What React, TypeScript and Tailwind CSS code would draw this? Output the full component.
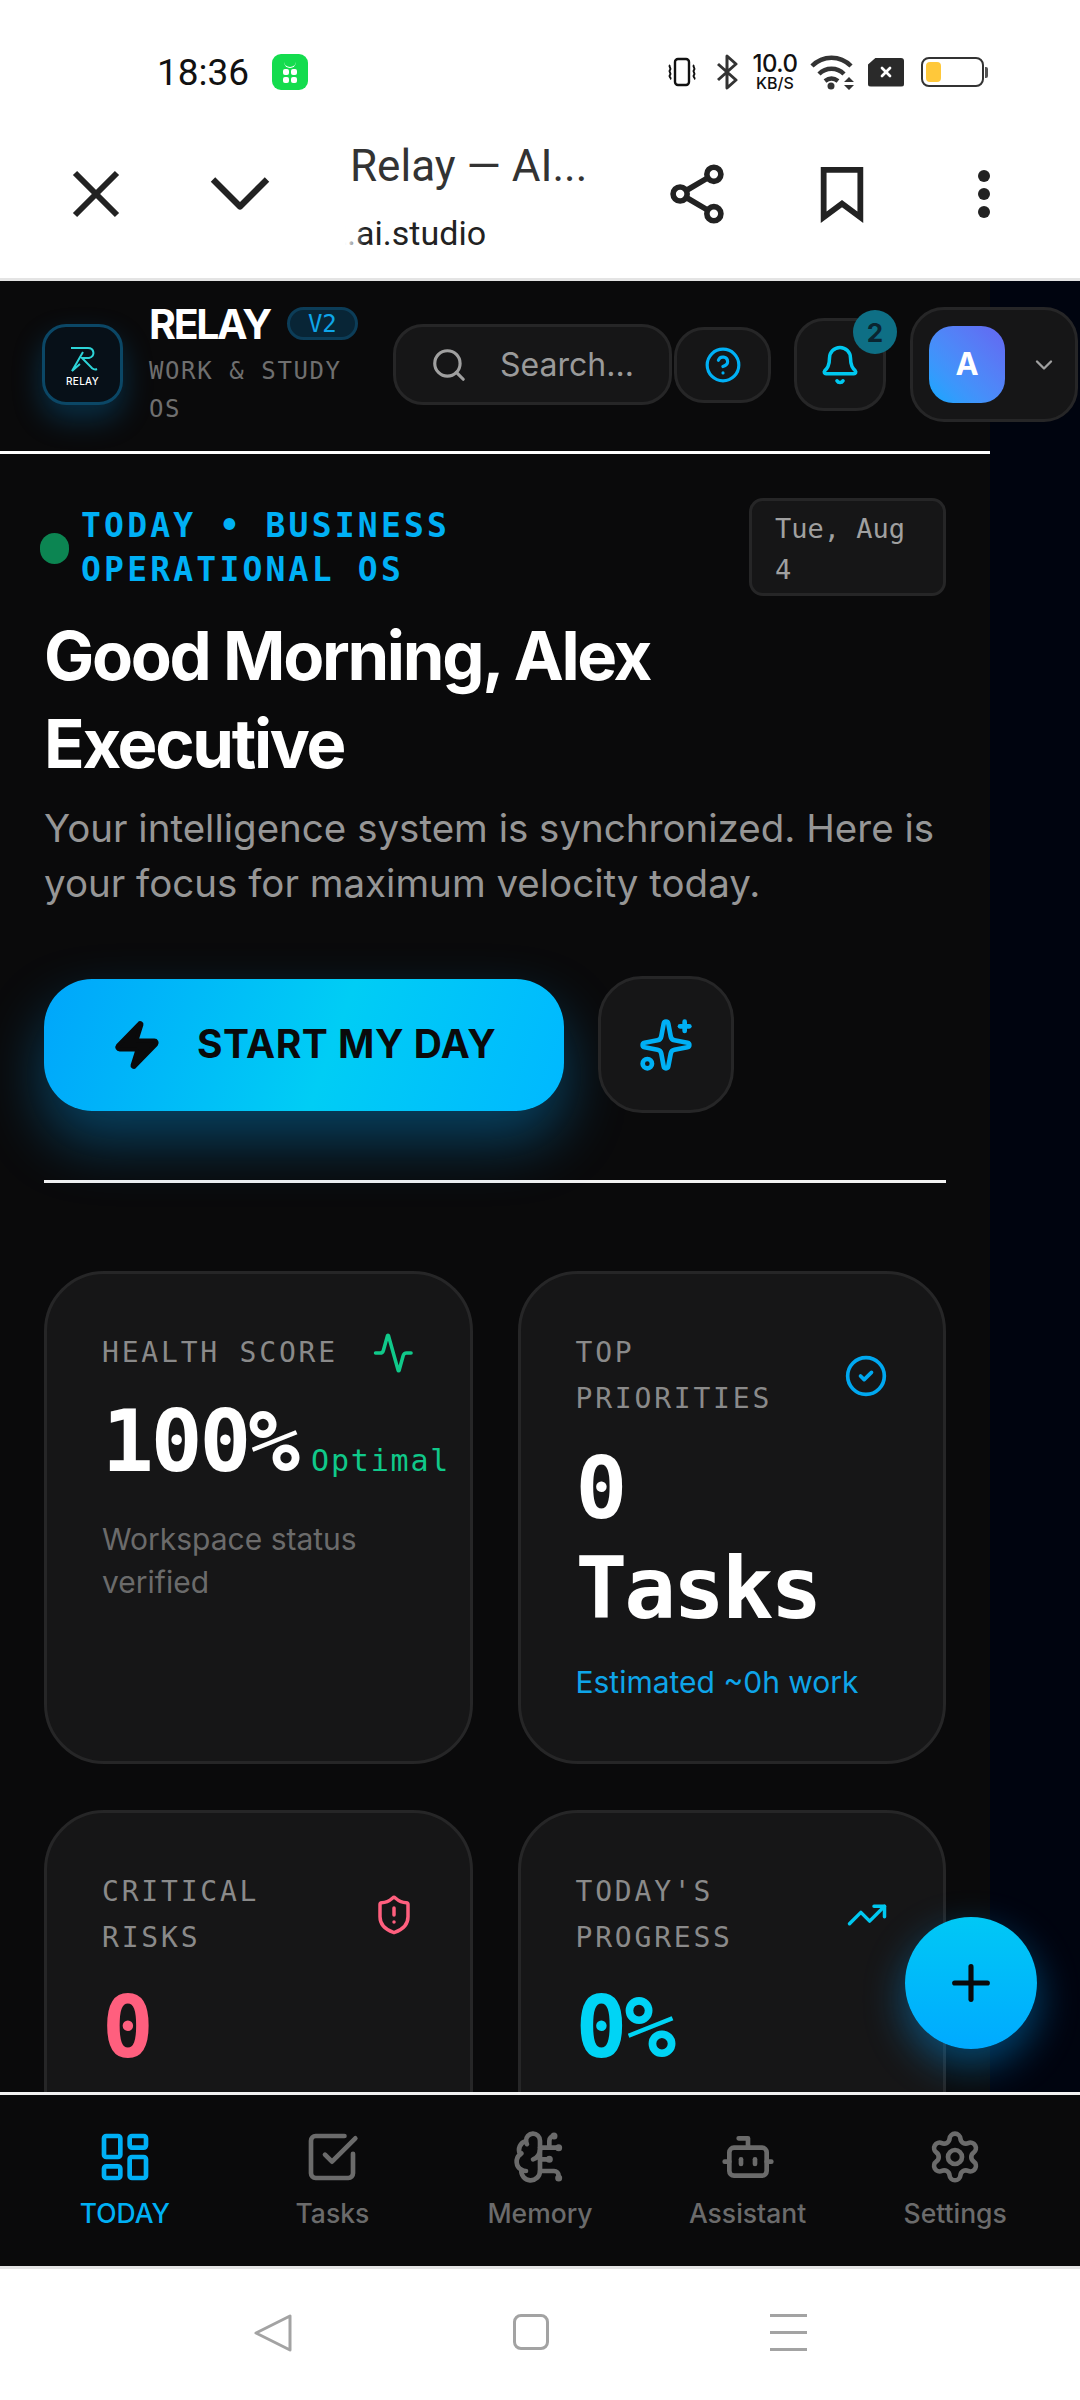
import {
  Activity,
  Bell,
  Bot,
  BrainCircuit,
  ChevronDown,
  CircleCheck,
  CircleHelp,
  LayoutDashboard,
  Plus,
  Search,
  Settings,
  ShieldAlert,
  Sparkles,
  SquareCheckBig,
  TrendingUp,
  X,
  Zap,
} from 'lucide-react'

const mono = "font-['DejaVu_Sans_Mono',monospace]"

function StatusIcons() {
  return (
    <div className="flex items-center text-[#222]">
      <svg width="32" height="30" viewBox="0 0 32 30" fill="none" stroke="#111" strokeWidth="2.4">
        <rect x="9" y="2" width="14" height="26" rx="3" />
        <path d="M4 8c-2 2 2 3 0 5s2 3 0 5 2 3 0 4M28 8c-2 2 2 3 0 5s2 3 0 5 2 3 0 4" strokeWidth="2" />
      </svg>
      <svg className="ml-[18px]" width="22" height="36" viewBox="0 0 22 36" fill="none" stroke="#333" strokeWidth="3" strokeLinejoin="round">
        <path d="M2 10l18 16-9 8V2l9 8L2 26" />
      </svg>
      <div className="ml-[12px] flex w-[50px] flex-col items-center font-['Inter',sans-serif] leading-none text-[#111]">
        <span className="text-[24px] font-medium leading-[18px] tracking-[-0.5px]">10.0</span>
        <span className="mt-[3px] text-[16px] font-medium leading-[14px]">KB/S</span>
      </div>
      <svg className="ml-[10px]" width="46" height="36" viewBox="0 0 46 36" fill="none" stroke="#333" strokeWidth="4.5">
        <path d="M2 12c11-11 28-11 39 0M9 20c7-7 18-7 25 0M15 27c4-3 9-3 13 0" />
        <circle cx="21" cy="32" r="3.5" fill="#333" stroke="none" />
        <path d="M39 23l5 5h-10zM39 36l5-5h-10z" fill="#333" stroke="none" />
      </svg>
      <div className="ml-[12px] flex h-[29px] w-[36px] items-center justify-center rounded-[3px] bg-[#2a2a2a] [clip-path:polygon(22%_0,100%_0,100%_100%,0_100%,0_24%)]">
        <X size={16} color="#fff" strokeWidth={4} />
      </div>
      <div className="ml-[17px] flex h-[30px] w-[63px] items-center rounded-[8px] border-[2.5px] border-[#333] p-[3px]">
        <div className="h-full w-[15px] rounded-[4px] bg-[#ffc83a]" />
      </div>
      <div className="ml-[1px] h-[11px] w-[3px] rounded-r-[2px] bg-[#555]" />
    </div>
  )
}

function Browser() {
  return (
    <div className="border-b-[3px] border-[#e4e4e4] bg-white">
      <div className="flex h-[98px] items-center justify-between pl-[157px] pr-[92px] pt-[46px]">
        <div className="flex items-center">
          <span className="font-['Roboto',sans-serif] text-[37px] leading-none text-[#111]">18:36</span>
          <div className="ml-[23px] flex h-[36px] w-[36px] flex-col items-center justify-center gap-[1px] rounded-[9px] bg-[#14dc4e]">
            <div className="h-[7px] w-[12px] rounded-b-full border-b-[1.5px] border-white" />
            <div className="grid grid-cols-2 gap-[2px]">
              <div className="h-[6px] w-[6px] rounded-[2px] bg-white" />
              <div className="h-[6px] w-[6px] rounded-[2px] bg-white" />
              <div className="h-[6px] w-[6px] rounded-[2px] bg-white" />
              <div className="h-[6px] w-[6px] rounded-[2px] bg-white" />
            </div>
          </div>
        </div>
        <StatusIcons />
      </div>
      <div className="flex h-[180px] items-start">
        <X className="ml-[54px] mt-[54px] shrink-0" size={84} color="#222" strokeWidth={1.7} strokeLinecap="butt" />
        <ChevronDown className="ml-[48px] mt-[41px] shrink-0" size={108} color="#222" strokeWidth={1.4} strokeLinecap="butt" />
        <div className="ml-[56px] mt-[40px] w-[270px] shrink-0 font-['Roboto',sans-serif]">
          <div className="text-[44px] leading-[56px] text-[#333]">Relay — AI...</div>
          <div className="relative mt-[18px] h-[42px] text-[34px] leading-[42px] text-[#222]">
            <span className="absolute left-[-22px] whitespace-nowrap">2.ai.studio</span>
            <div className="absolute inset-y-0 left-[-24px] w-[38px] bg-gradient-to-r from-white from-50% to-transparent" />
          </div>
        </div>
        <svg className="ml-[48px] mt-[66px] shrink-0" width="58" height="60" viewBox="0 0 58 64" fill="none" stroke="#222" strokeWidth="6">
          <circle cx="47" cy="11" r="7.5" />
          <circle cx="11" cy="32" r="7.5" />
          <circle cx="47" cy="53" r="7.5" />
          <path d="M18 28l22-13M18 36l22 13" />
        </svg>
        <svg className="ml-[94px] mt-[69px] shrink-0" width="44" height="56" viewBox="0 0 44 58" fill="none" stroke="#222" strokeWidth="6">
          <path d="M3 3h38v49L22 38 3 52z" strokeLinejoin="miter" />
        </svg>
        <div className="ml-[114px] mt-[72px] flex shrink-0 flex-col gap-[6px]">
          <div className="h-[12px] w-[12px] rounded-full bg-[#222]" />
          <div className="h-[12px] w-[12px] rounded-full bg-[#222]" />
          <div className="h-[12px] w-[12px] rounded-full bg-[#222]" />
        </div>
      </div>
    </div>
  )
}

function Header() {
  return (
    <header className="flex h-[173px] w-[990px] items-center border-b-[3px] border-white pb-[3px] pl-[42px]">
      <div className="relative h-[81px] w-[81px] shrink-0 rounded-[24px] border-[3px] border-[#0b4766] bg-[#071018] shadow-[0_14px_30px_rgba(0,140,220,0.28)]">
        <svg className="absolute left-[25px] top-[20px]" width="28" height="26" viewBox="0 0 28 26" fill="none" stroke="#2dd4d8" strokeWidth="2">
          <path d="M1 1h17c6 0 8 8 1 10H12l9 9c1 2 4 3 6 2" />
          <path d="M13 5L2 24l8-7" />
        </svg>
        <div className="absolute inset-x-0 top-[49px] text-center font-['Inter',sans-serif] text-[10px] font-medium leading-[10px] tracking-[0.3px] text-white">RELAY</div>
      </div>
      <div className="ml-[26px] w-[244px] shrink-0">
        <div className="flex items-center">
          <span className="font-['Inter',sans-serif] text-[41px] font-bold leading-[44px] tracking-[-2.3px] text-white">RELAY</span>
          <span className={`ml-[17px] flex h-[33px] w-[71px] items-center justify-center rounded-full border-[3px] border-[#0c3d58] bg-[#082536] text-[24px] leading-none text-[#0ea5e9] ${mono}`}>V2</span>
        </div>
        <div className={`mt-[6px] w-[210px] text-[24px] leading-[38px] tracking-[1.6px] text-[#6f6f6f] ${mono}`}>WORK &amp; STUDY OS</div>
      </div>
      <div className="flex h-[81px] w-[279px] shrink-0 items-center rounded-[30px] border-[3px] border-[#262627] bg-[#161617] pl-[34px]">
        <Search size={38} color="#a0a0a0" strokeWidth={2} />
        <span className="ml-[32px] font-['Inter',sans-serif] text-[32px] text-[#9a9a9a]">Search...</span>
      </div>
      <div className="ml-[2px] flex h-[76px] w-[97px] shrink-0 items-center justify-center rounded-[30px] border-[3px] border-[#262627] bg-[#161617]">
        <CircleHelp size={38} color="#00b0f5" strokeWidth={2} />
      </div>
      <div className="relative ml-[23px] flex h-[93px] w-[92px] shrink-0 items-center justify-center rounded-[30px] border-[3px] border-[#262627] bg-[#161617]">
        <Bell size={42} color="#00c8f0" strokeWidth={2} />
        <div className="absolute left-[56px] top-[-11px] flex h-[44px] w-[44px] items-center justify-center rounded-full bg-[#0e6f85] font-['Inter',sans-serif] text-[26px] font-bold text-[#0a2530]">2</div>
      </div>
      <div className="ml-[24px] flex h-[115px] w-[168px] shrink-0 items-center rounded-[34px] border-[3px] border-[#262627] bg-[#161617] pl-[16px]">
        <div className="flex h-[77px] w-[76px] items-center justify-center rounded-[24px] bg-gradient-to-tr from-[#00a8ff] to-[#6366f1] font-['Inter',sans-serif] text-[31px] font-bold text-white">A</div>
        <ChevronDown className="ml-[25px]" size={28} color="#a0a0a0" strokeWidth={2} />
      </div>
    </header>
  )
}

function Hero() {
  return (
    <section className="border-b-[3px] border-[#f2f2f2] pb-[67px]">
      <div className="flex items-start justify-between">
        <div className="flex items-center pt-[6px]">
          <div className="-ml-[4px] h-[31px] w-[29px] rounded-full bg-[#0c8552]" />
          <div className={`ml-[12px] w-[420px] text-[33px] font-bold leading-[44px] tracking-[3.2px] text-[#00b0f5] ${mono}`}>TODAY • BUSINESS OPERATIONAL OS</div>
        </div>
        <div className={`h-[98px] w-[197px] rounded-[14px] border-[3px] border-[#262627] bg-[#161617] pl-[23px] pt-[7px] text-[27px] leading-[41px] text-[#a0a0a0] ${mono}`}>
          Tue, Aug<br />4
        </div>
      </div>
      <h1 className="mt-[16px] font-['Inter',sans-serif] text-[67px] font-bold leading-[88px] tracking-[-2.3px] text-white">
        Good Morning, Alex<br />Executive
      </h1>
      <p className="mt-[13px] font-['Inter',sans-serif] text-[38.5px] leading-[55px] text-[#969696]">
        Your intelligence system is synchronized. Here is your focus for maximum velocity today.
      </p>
      <div className="mt-[65px] flex items-center">
        <button className="flex h-[132px] w-[520px] items-center rounded-[48px] bg-[linear-gradient(110deg,#00a6fb_0%,#00cdf5_55%,#00b8ff_100%)] pl-[67px] shadow-[0_30px_60px_rgba(0,150,230,0.4)]">
          <Zap size={52} color="#0a0a0b" fill="#0a0a0b" strokeWidth={2} />
          <span className="ml-[34px] font-['Inter',sans-serif] text-[39px] font-bold tracking-[0.5px] text-[#0a0a0b]">START MY DAY</span>
        </button>
        <button className="ml-[34px] flex h-[137px] w-[136px] items-center justify-center rounded-[44px] border-[3px] border-[#262627] bg-[#161617]">
          <Sparkles size={56} color="#00b0f5" strokeWidth={2} />
        </button>
      </div>
    </section>
  )
}

function CardLabel({ lines, icon }: { lines: string[]; icon: React.ReactNode }) {
  return (
    <div className="flex items-center justify-between">
      <div className={`text-[28px] leading-[46px] tracking-[2.8px] text-[#8a8a8a] ${mono}`}>
        {lines.map((l) => (
          <div key={l}>{l}</div>
        ))}
      </div>
      {icon}
    </div>
  )
}

function Cards() {
  const card = 'h-[493px] rounded-[60px] border-[3px] border-[#262627] bg-[#161617] px-[55px] pt-[56px]'
  const big = `text-[86px] font-bold tracking-[-3px] ${mono}`
  return (
    <section className="mt-[88px] grid grid-cols-2 gap-x-[45px] gap-y-[46px]">
      <div className={card}>
        <div className="flex items-center">
          <div className={`whitespace-nowrap text-[28px] leading-[46px] tracking-[2.8px] text-[#8a8a8a] ${mono}`}>HEALTH SCORE</div>
          <Activity className="ml-[34px]" size={44} color="#10c98a" strokeWidth={2} />
        </div>
        <div className="mt-[15px] flex items-baseline whitespace-nowrap">
          <span className={`${big} leading-[100px] text-white`}>100%</span>
          <span className={`ml-[14px] text-[30px] tracking-[1.8px] text-[#10c98a] ${mono}`}>Optimal</span>
        </div>
        <p className="mt-[27px] w-[300px] font-['Inter',sans-serif] text-[30px] leading-[43px] text-[#6b6b6b]">Workspace status verified</p>
      </div>
      <div className={card}>
        <CardLabel lines={['TOP', 'PRIORITIES']} icon={<CircleCheck size={44} color="#00a8f0" strokeWidth={2} />} />
        <div className={`${big} mt-[16px] leading-[100px] text-white`}>0<br />Tasks</div>
        <p className="mt-[23px] whitespace-nowrap font-['Inter',sans-serif] text-[30px] leading-[43px] text-[#0ea5e9]">Estimated ~0h work</p>
      </div>
      <div className={card}>
        <CardLabel lines={['CRITICAL', 'RISKS']} icon={<ShieldAlert size={42} color="#ff5f7e" strokeWidth={2} />} />
        <div className={`${big} mt-[16px] leading-[100px] text-[#ff5f7e]`}>0</div>
      </div>
      <div className={card}>
        <CardLabel lines={["TODAY'S", 'PROGRESS']} icon={<TrendingUp size={42} color="#00c8f0" strokeWidth={2} />} />
        <div className={`${big} mt-[16px] leading-[100px] text-[#00d4f5]`}>0%</div>
      </div>
    </section>
  )
}

const navItems = [
  { label: 'TODAY', Icon: LayoutDashboard, active: true },
  { label: 'Tasks', Icon: SquareCheckBig, active: false },
  { label: 'Memory', Icon: BrainCircuit, active: false },
  { label: 'Assistant', Icon: Bot, active: false },
  { label: 'Settings', Icon: Settings, active: false },
]

function BottomNav() {
  return (
    <nav className="flex h-[177px] border-y-[3px] border-b-[#e4e4e4] border-t-[#f2f2f2] bg-[#0a0a0b] px-[21px] pt-[34px]">
      {navItems.map(({ label, Icon, active }) => (
        <div key={label} className="flex flex-1 flex-col items-center">
          <Icon size={56} color={active ? '#00b0f5' : '#6b6b6b'} strokeWidth={2} />
          <span className={`mt-[10px] font-['Inter',sans-serif] text-[26.5px] font-medium leading-[36px] ${active ? 'text-[#00b0f5]' : 'text-[#6b6b6b]'}`}>{label}</span>
        </div>
      ))}
    </nav>
  )
}

function SystemBar() {
  return (
    <div className="flex h-[131px] items-start bg-white pl-[254px] pt-[45px]">
      <svg width="38" height="38" viewBox="0 0 38 38" fill="none" stroke="#a3a3a3" strokeWidth="3" strokeLinejoin="round">
        <path d="M36 2v34L2 19z" />
      </svg>
      <div className="ml-[221px] h-[36px] w-[36px] rounded-[8px] border-[3px] border-[#a3a3a3]" />
      <div className="ml-[221px] flex h-[37px] w-[37px] flex-col justify-between">
        <div className="h-[3px] bg-[#a3a3a3]" />
        <div className="h-[3px] bg-[#a3a3a3]" />
        <div className="h-[3px] bg-[#a3a3a3]" />
      </div>
    </div>
  )
}

export default function App() {
  return (
    <div className="flex h-[2400px] w-[1080px] flex-col overflow-hidden bg-white">
      <Browser />
      <main className="relative h-[1811px] shrink-0 overflow-hidden bg-[#00040f]">
        <div className="h-full w-[990px] bg-[#0a0a0b]">
          <Header />
          <div className="px-[44px] pt-[44px]">
            <Hero />
            <Cards />
          </div>
        </div>
        <button className="absolute left-[905px] top-[1636px] flex h-[132px] w-[132px] items-center justify-center rounded-full bg-gradient-to-b from-[#00c8f5] to-[#00aaff] shadow-[0_16px_40px_rgba(0,150,240,0.45)]">
          <Plus size={56} color="#0a0a0b" strokeWidth={2.2} />
        </button>
      </main>
      <BottomNav />
      <SystemBar />
    </div>
  )
}
